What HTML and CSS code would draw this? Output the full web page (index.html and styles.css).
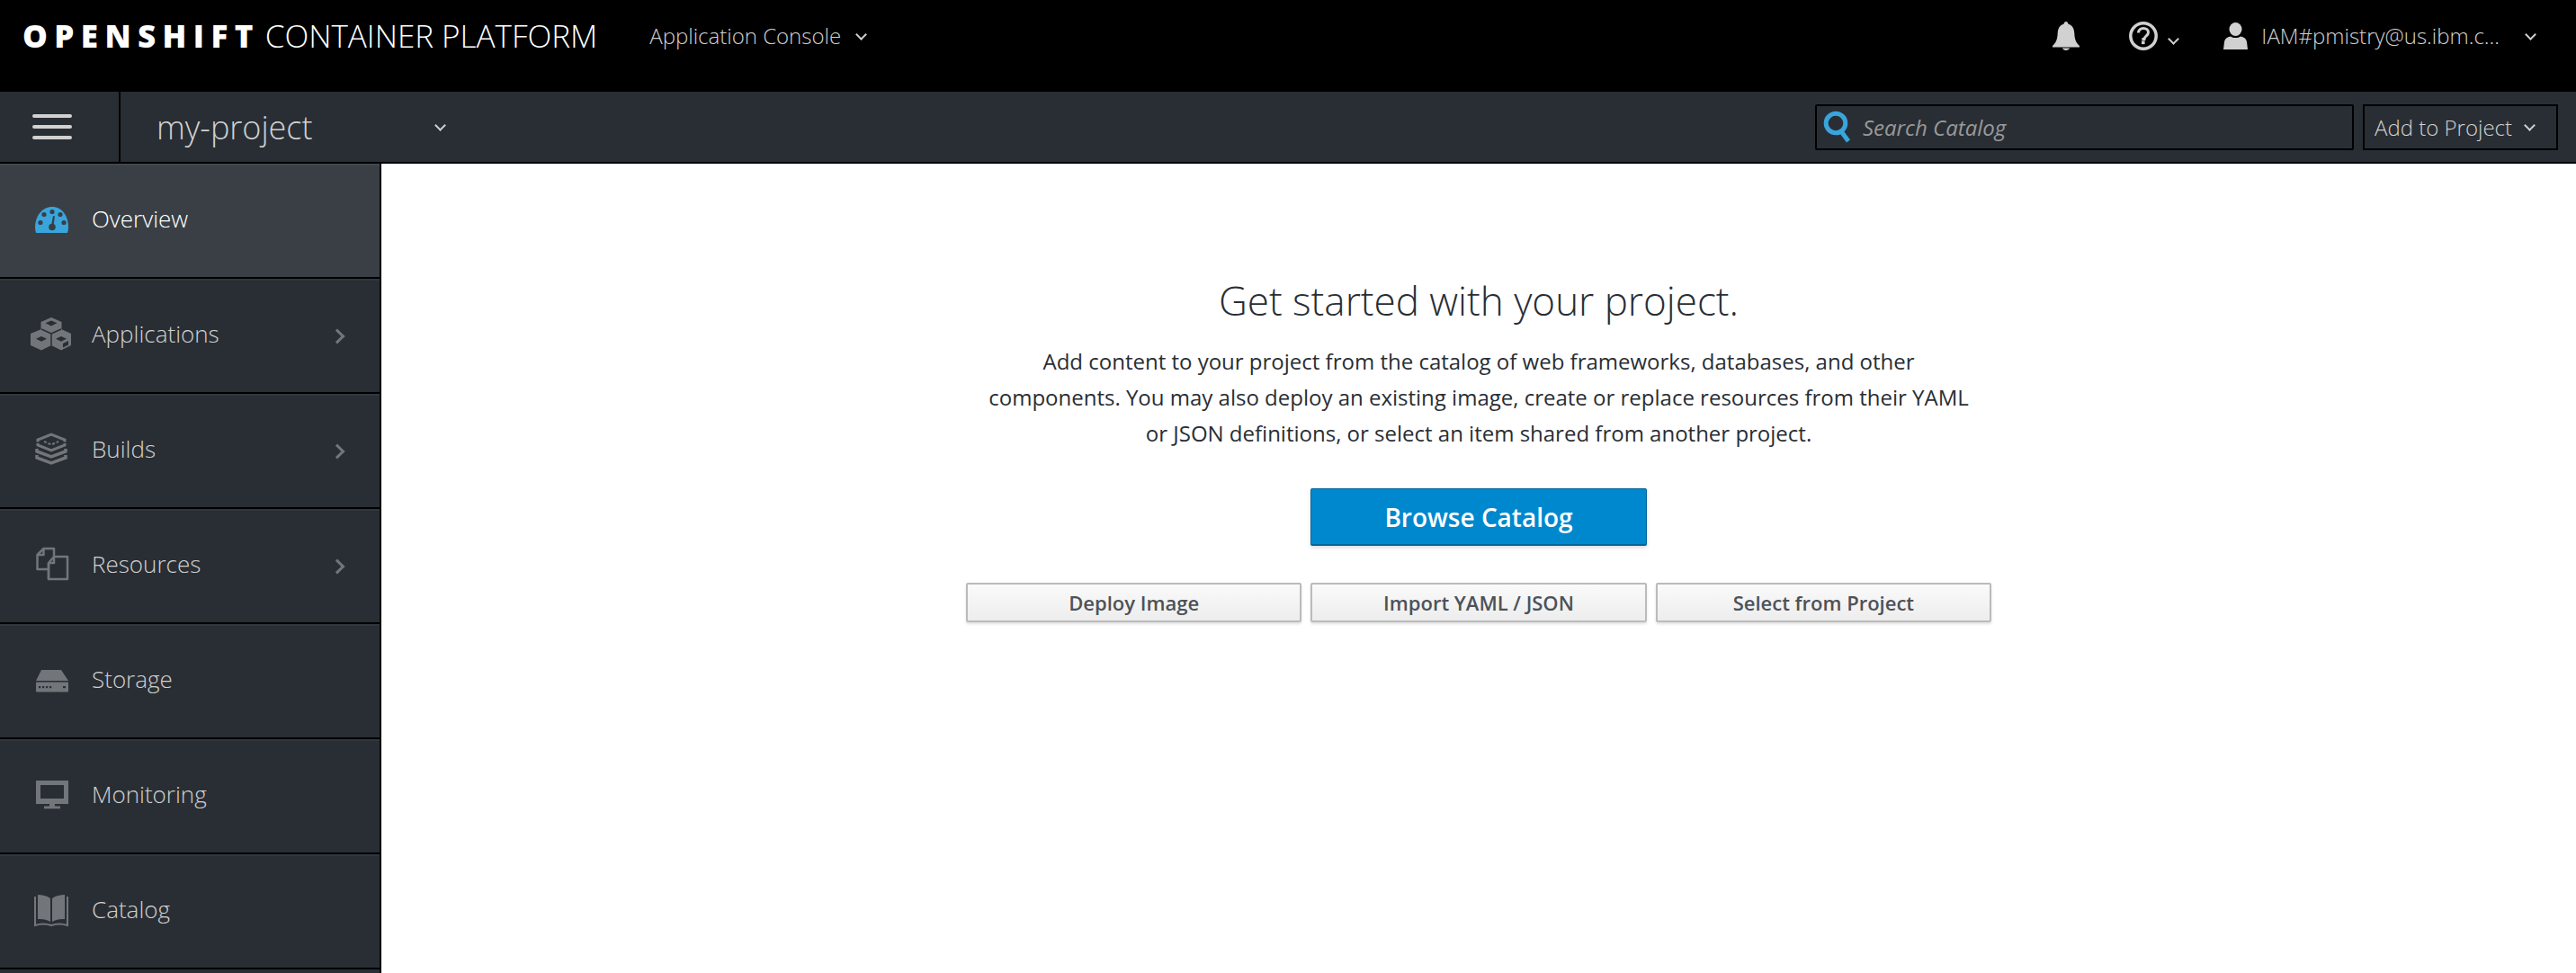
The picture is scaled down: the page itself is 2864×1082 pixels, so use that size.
FILE: index.html

```html
<!DOCTYPE html>
<html lang="en">
<head>
    <meta charset="UTF-8">
    <meta name="viewport" content="width=device-width, initial-scale=1.0">
    <title>OpenShift Container Platform</title>
    <link rel="stylesheet" href="styles.css">
</head>
<body>
    <header class="topbar">
        <a class="brand"><span class="brand-strong">OPENSHIFT</span><span class="brand-light">CONTAINER PLATFORM</span></a>
        <a class="console-switch">Application Console<span class="caret"></span></a>
        <div class="topbar-right">
            <svg class="icon-bell" width="30" height="32" viewBox="0 0 30 32"><path fill="#d1d1d1" d="M15 0c1.400 0 2.200 1 2.300 2.600C22 4 24 8 24.300 13c.3 6 1.300 10 5.700 14v1.500H0V27c4.400-4 5.400-8 5.700-14C6 8 8 4 12.700 2.600 12.800 1 13.600 0 15 0zM11 29.500h8c-.3 1.600-2 2.500-4 2.500s-3.700-.9-4-2.500z"/></svg>
            <span class="help">
                <svg width="32" height="32" viewBox="0 0 32 32"><circle cx="16" cy="16" r="14.200" fill="none" stroke="#d1d1d1" stroke-width="3.500"/><path d="M10.500 12.500c0-3.200 2.400-5 5.500-5s5.500 1.800 5.500 4.600c0 3.700-4.300 3.800-4.500 7.400h-2.600" fill="none" stroke="#d1d1d1" stroke-width="3"/><rect x="14" y="21.500" width="3.600" height="3.600" fill="#d1d1d1"/></svg>
                <span class="caret"></span>
            </span>
            <span class="user">
                <svg width="27" height="30" viewBox="0 0 27 30"><ellipse cx="13.500" cy="7.500" rx="7" ry="7.500" fill="#d1d1d1"/><path fill="#d1d1d1" d="M8 15.500c3 2 8 2 11 0 4 .8 6.500 2.500 7 6L27 30H0l1-8.500c.5-3.500 3-5.200 7-6z"/></svg>
                <span class="user-name">IAM#pmistry@us.ibm.c...</span>
                <span class="caret"></span>
            </span>
        </div>
    </header>

    <nav class="projectbar">
        <button class="hamburger"><span></span><span></span><span></span></button>
        <div class="project-picker"><span class="project-name">my-project</span><span class="caret"></span></div>
        <div class="projectbar-right">
            <div class="search">
                <svg width="32" height="36" viewBox="0 0 32 36"><circle cx="14" cy="14" r="10.800" fill="none" stroke="#39a5dc" stroke-width="5"/><path d="M20 23l8 11" stroke="#39a5dc" stroke-width="5" fill="none"/></svg>
                <span class="search-text">Search Catalog</span>
            </div>
            <a class="add-button">Add to Project<span class="caret"></span></a>
        </div>
    </nav>

    <div class="layout">
        <aside class="sidebar">
            <a class="nav-item active">
                <svg width="46" height="46" viewBox="0 0 46 46"><path fill="#39a5dc" d="M6 36c-.6-2-1-4-1-6C5 17 13 7 24 7s18 10 18 23c0 2-.4 4-1 6z"/><g fill="#393f44"><circle cx="24" cy="12.500" r="2.600"/><circle cx="15" cy="15.500" r="2.600"/><circle cx="33" cy="15.500" r="2.600"/><circle cx="11" cy="24.500" r="2.600"/><circle cx="37" cy="24.500" r="2.600"/><circle cx="24" cy="29.500" r="3.800"/><path d="M23 28l2-11 2 .5-1.600 11z"/></g></svg>
                <span class="nav-label">Overview</span>
            </a>
            <a class="nav-item">
                <svg width="46" height="46" viewBox="0 0 46 46"><g fill="#72767b"><path d="M23 2l11.500 5v12L23 25 11.500 19V7z"/><path d="M12 15l11 5v13l-11 5.500L0 33V20z"/><path d="M34 15l11 5v13l-11 5.500L23 33V20z"/></g><g fill="none" stroke="#292e34" stroke-width="1.500"><path d="M12 15l11 5M23 20v13M34 15L23 20"/></g><g fill="#292e34"><path d="M23 5.500l6.500 2.800L23 11.500l-6.500-3.200z"/><path d="M34 23l6 2.700-6 3-6-3z"/><path d="M12 23l6 2.700-6 3-6-3z"/><path d="M36 31l6-3v4.500l-6 3z"/></g></svg>
                <span class="nav-label">Applications</span>
                <span class="chevron"></span>
            </a>
            <a class="nav-item">
                <svg width="46" height="46" viewBox="0 0 46 46"><g fill="none" stroke="#72767b"><path stroke-width="3" d="M8 12.500V10l15-6 15 6v2.500M8 14v2l15 6 15-6v-2"/><path stroke-width="2" stroke-dasharray="3 2" d="M15 12l8 3.500 8-3.500"/><path stroke-width="3.500" d="M7 20v3l16 6 16-6v-3"/><path stroke-width="3.500" d="M7 27v3l16 6 16-6v-3"/></g></svg>
                <span class="nav-label">Builds</span>
                <span class="chevron"></span>
            </a>
            <a class="nav-item">
                <svg width="46" height="46" viewBox="0 0 46 46"><g fill="none" stroke="#72767b" stroke-width="2.500" stroke-linejoin="round"><path d="M20 26H7.500V10l7-7H26v8"/><path d="M14.500 3v7H7.500"/><path d="M20 37h21V12H26l-6 7z"/><path d="M26 12v7h-6"/><path d="M20 19v18"/></g></svg>
                <span class="nav-label">Resources</span>
                <span class="chevron"></span>
            </a>
            <a class="nav-item">
                <svg width="46" height="46" viewBox="0 0 46 46"><path fill="#72767b" d="M12 10h22l8 12H6z"/><rect x="6" y="23.500" width="36" height="11" rx="1" fill="#72767b"/><g fill="#292e34"><rect x="9" y="28" width="2.200" height="2.200"/><rect x="13" y="28" width="2.200" height="2.200"/><rect x="17" y="28" width="2.200" height="2.200"/><rect x="21" y="28" width="2.200" height="2.200"/><rect x="36" y="28" width="3" height="2.200"/></g></svg>
                <span class="nav-label">Storage</span>
            </a>
            <a class="nav-item">
                <svg width="46" height="46" viewBox="0 0 46 46"><path fill="#72767b" fill-rule="evenodd" d="M6 5h36v26H6zm5 5v15h26V10z"/><rect x="21" y="31" width="6" height="3" fill="#72767b"/><rect x="15" y="33.500" width="18" height="2.800" fill="#72767b"/></svg>
                <span class="nav-label">Monitoring</span>
            </a>
            <a class="nav-item">
                <svg width="46" height="46" viewBox="0 0 46 46"><g fill="#72767b"><path d="M8 4c5 0 10 1 14 4v26c-4-2.500-9-3.500-14-3z"/><path d="M38 4c-5 0-10 1-14 4v26c4-2.500 9-3.500 14-3z"/></g><path d="M5 6v32c6-2 12-2 18 0 6-2 12-2 18 0V6" fill="none" stroke="#72767b" stroke-width="2"/></svg>
                <span class="nav-label">Catalog</span>
            </a>
        </aside>

        <main class="content">
            <div class="empty-state">
                <h1>Get started with your project.</h1>
                <p>Add content to your project from the catalog of web frameworks, databases, and other components. You may also deploy an existing image, create or replace resources from their YAML or JSON definitions, or select an item shared from another project.</p>
                <div class="primary-row"><button class="btn-primary">Browse Catalog</button></div>
                <div class="secondary-row">
                    <button class="btn-default">Deploy Image</button>
                    <button class="btn-default">Import YAML / JSON</button>
                    <button class="btn-default">Select from Project</button>
                </div>
            </div>
        </main>
    </div>
</body>
</html>
```

FILE: styles.css

```css
* {
    box-sizing: border-box;
}
html, body {
    height: 100%;
}
body {
    margin: 0;
    display: flex;
    flex-direction: column;
    overflow: hidden;
    background: #fff;
    font-family: "Open Sans", "Noto Sans", sans-serif;
    color: #292e34;
}
.caret {
    display: inline-block;
    width: 9px;
    height: 9px;
    border-right: 2px solid currentColor;
    border-bottom: 2px solid currentColor;
    transform: rotate(45deg);
}

/* top black bar */
.topbar {
    height: 102px;
    flex-shrink: 0;
    display: flex;
    align-items: center;
    padding: 0 46px 22px 25px;
    background: #000;
    color: #d1d1d1;
}
.brand {
    display: flex;
    align-items: center;
    color: #fff;
    line-height: 40px;
}
.brand-strong {
    font-weight: 800;
    font-size: 35px;
    letter-spacing: 7.400px;
    margin-right: 6px;
}
.brand-light {
    font-weight: 300;
    font-size: 35px;
}
.console-switch {
    display: flex;
    align-items: center;
    margin-left: 58px;
    margin-top: -1px;
    font-size: 24px;
    font-weight: 300;
}
.console-switch .caret {
    margin-left: 18px;
    margin-top: -2px;
}
.topbar-right {
    margin-left: auto;
    display: flex;
    align-items: center;
}
.help {
    display: flex;
    align-items: center;
    margin-left: 55px;
}
.help .caret {
    margin-left: 13px;
    margin-top: 6px;
}
.user {
    display: flex;
    align-items: center;
    margin-left: 51px;
}
.user-name {
    margin-left: 15px;
    margin-top: -2px;
    font-size: 24px;
    font-weight: 300;
}
.user .caret {
    margin-left: 30px;
    margin-top: -4px;
}

/* project bar */
.projectbar {
    height: 80px;
    flex-shrink: 0;
    display: flex;
    align-items: center;
    background: #292e34;
    border-bottom: 2px solid #000;
    color: #d1d1d1;
}
.hamburger {
    width: 134px;
    height: 78px;
    display: flex;
    flex-direction: column;
    gap: 8px;
    align-items: flex-start;
    justify-content: center;
    padding: 0 0 0 36px;
    background: none;
    border: none;
    border-right: 2px solid #000;
}
.hamburger span {
    width: 44px;
    height: 4px;
    border-radius: 2px;
    background: #d1d1d1;
}
.project-picker {
    display: flex;
    align-items: center;
    padding-left: 40px;
}
.project-name {
    width: 311px;
    font-size: 36px;
    font-weight: 300;
}
.project-picker .caret {
    margin-top: -4px;
}
.projectbar-right {
    margin-left: auto;
    display: flex;
    gap: 10px;
    padding-right: 20px;
}
.search {
    width: 599px;
    height: 51px;
    display: flex;
    align-items: center;
    padding-left: 7px;
    border: 2px solid #000;
    border-radius: 2px;
}
.search-text {
    margin-left: 12px;
    font-size: 24px;
    font-style: italic;
    color: #999;
}
.add-button {
    width: 217px;
    height: 51px;
    display: flex;
    align-items: center;
    padding-left: 11px;
    border: 2px solid #000;
    font-size: 24px;
    font-weight: 300;
    white-space: nowrap;
}
.add-button .caret {
    margin-left: 15px;
    margin-top: -4px;
}

/* sidebar */
.layout {
    flex: 1;
    display: flex;
    min-height: 0;
}
.sidebar {
    width: 424px;
    flex-shrink: 0;
    background: #292e34;
    border-right: 2px solid #000;
}
.nav-item {
    height: 128px;
    display: flex;
    align-items: center;
    padding-left: 34px;
    background: #292e34;
    border-top: 2px solid #32373d;
    border-bottom: 2px solid #000;
    color: #d1d1d1;
    font-size: 26px;
    font-weight: 300;
}
.nav-item svg {
    margin-right: 22px;
}
.nav-label {
    margin-bottom: 6px;
}
.nav-item.active {
    background: #393f44;
    border-top-color: #42484f;
    color: #fff;
}
.chevron {
    width: 12px;
    height: 12px;
    margin-left: auto;
    margin-right: 41px;
    border-top: 3px solid #72767b;
    border-right: 3px solid #72767b;
    transform: rotate(45deg);
}

/* main content */
.content {
    flex: 1;
    display: flex;
    justify-content: center;
}
.empty-state {
    width: 1140px;
    padding-top: 122px;
    text-align: center;
}
h1 {
    margin: 0;
    font-size: 44px;
    line-height: 60px;
    font-weight: 300;
    color: #292e34;
}
p {
    width: 1110px;
    margin: 18px auto 0;
    font-size: 24px;
    line-height: 40px;
    color: #292e34;
}
.primary-row {
    display: flex;
    justify-content: center;
    margin-top: 41px;
}
.btn-primary {
    width: 374px;
    height: 64px;
    background: #0088ce;
    border: 1px solid #00659c;
    border-bottom-width: 2px;
    border-radius: 2px;
    box-shadow: 0 2px 4px rgba(0, 0, 0, 0.15);
    color: #fff;
    font-family: inherit;
    font-size: 28px;
    font-weight: 600;
}
.secondary-row {
    display: grid;
    grid-template-columns: repeat(3, 1fr);
    gap: 10px;
    margin-top: 41px;
}
.btn-default {
    height: 44px;
    background: linear-gradient(#fafafa, #ededed);
    border: 2px solid #bbb;
    border-radius: 2px;
    box-shadow: 0 2px 3px rgba(0, 0, 0, 0.12);
    color: #4d5258;
    font-family: inherit;
    font-size: 22px;
    font-weight: 600;
}
```
